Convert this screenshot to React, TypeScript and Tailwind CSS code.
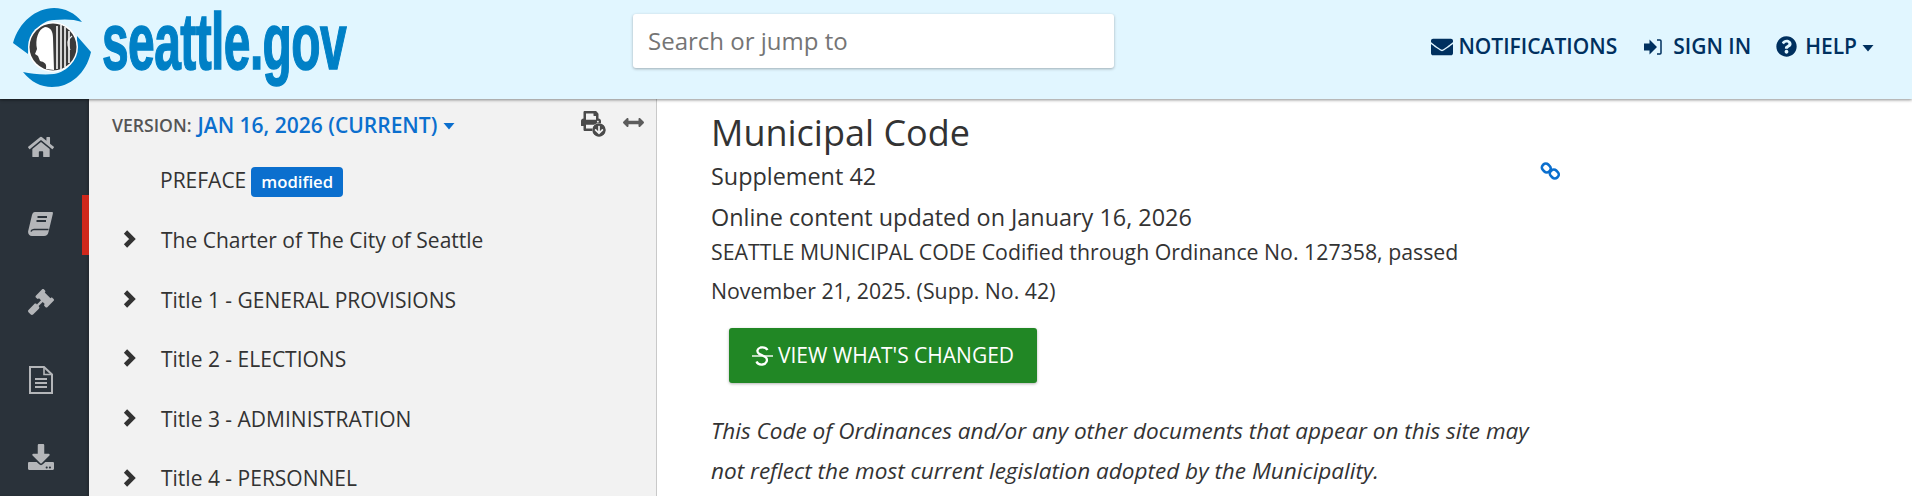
import React from 'react';
import {
    FaArrowCircleDown,
    FaArrowsAltH,
    FaDownload,
    FaEnvelope,
    FaGavel,
    FaHome,
    FaPrint,
    FaQuestionCircle,
} from 'react-icons/fa';

const titles = [
    'The Charter of The City of Seattle',
    'Title 1 - GENERAL PROVISIONS',
    'Title 2 - ELECTIONS',
    'Title 3 - ADMINISTRATION',
    'Title 4 - PERSONNEL',
];

const Caret: React.FC<{ className?: string }> = ({ className }) => (
    <svg width="12" height="7" viewBox="0 0 12 7" className={className}>
        <path d="M0.5 0 H11.5 L6 6.5 Z" fill="currentColor" />
    </svg>
);

const Chevron: React.FC = () => (
    <svg width="13" height="20" viewBox="0 0 13 20" className="-mt-[3px] ml-[34px] mr-[25px] shrink-0">
        <polyline points="2.5,3 9.5,10 2.5,17" fill="none" stroke="#333" strokeWidth="4.6" />
    </svg>
);

const BookIcon: React.FC = () => (
    <svg width="25" height="24" viewBox="0 0 25 24">
        <path d="M7 0 H24 C25 0 25 1 24.8 2 L20.5 20 C20 22.5 18.5 24 16 24 H4 C1 24 -0.5 21.5 0.3 18.5 L4 3 C4.5 1 5.5 0 7 0 Z" fill="#b4b6b9" />
        <path d="M3 19.5 C3.5 18 4.5 17.5 6 17.5 H20.5" fill="none" stroke="#2a323a" strokeWidth="1.6" />
        <path d="M9.5 5 H19 M8.5 9 H18" stroke="#2a323a" strokeWidth="1.8" />
    </svg>
);

const FileIcon: React.FC = () => (
    <svg width="24" height="28" viewBox="0 0 24 28">
        <path d="M1 1 H15 L23 8.5 V27 H1 Z" fill="none" stroke="#b4b6b9" strokeWidth="2" />
        <path d="M15 1 V8.5 H23" fill="none" stroke="#b4b6b9" strokeWidth="1.6" />
        <path d="M6 13 H18 M6 17 H18 M6 21 H18" stroke="#b4b6b9" strokeWidth="2" />
    </svg>
);

const SignInIcon: React.FC = () => (
    <svg width="18" height="16" viewBox="0 0 18 16" className="mr-[11px] shrink-0">
        <path d="M0 4.5 H5.5 V0.5 L13 8 L5.5 15.5 V11.5 H0 Z" fill="currentColor" />
        <path d="M13 1 H16 C16.8 1 17 1.5 17 2 V14 C17 14.5 16.8 15 16 15 H13" fill="none" stroke="currentColor" strokeWidth="1.5" />
    </svg>
);

const StrikeS: React.FC = () => (
    <svg width="21" height="20" viewBox="0 0 21 20" className="mr-[5px] shrink-0">
        <path d="M15.5 4 C14 1.5 11 1 8.5 1.5 C5 2.5 4.5 6 7 7.7 C9 9 12 9.5 14 11.5 C16 14 14.5 18 10.5 18.5 C8 18.8 5.5 18 4.5 15.5" fill="none" stroke="#fff" strokeWidth="2.3" />
        <path d="M0 10 H21" stroke="#fff" strokeWidth="1.4" />
    </svg>
);

const ChainIcon: React.FC<{ className?: string }> = ({ className }) => (
    <svg width="20" height="20" viewBox="0 0 20 20" className={className}>
        <rect x="1.8" y="3.2" width="9" height="7.6" rx="3.4" transform="rotate(45 6.3 7)" fill="none" stroke="#0b6fce" strokeWidth="2.6" />
        <rect x="9.8" y="9.2" width="9" height="7.6" rx="3.4" transform="rotate(45 14.3 13)" fill="none" stroke="#0b6fce" strokeWidth="2.6" />
    </svg>
);

const Logo: React.FC = () => (
    <div className="flex items-start">
        <svg width="100" height="96" viewBox="0 0 100 96" className="ml-[2px] shrink-0">
            {/* swoosh, top and bottom halves */}
            <path d="M11 43 C17 22 34 8 52 8 C63 8 73 13 80 22 C72 19 62 19 52 20 C38 21 28 32 26 54 Z" fill="#0080c6" />
            <path d="M89 52 C84 74 68 87 50 87 C39 87 29 82 21 72 C30 74 42 75 52 74 C66 72 76 60 75 36 Z" fill="#0080c6" />
            <circle cx="51" cy="47" r="25" fill="#fff" />
            <circle cx="51" cy="47" r="23.5" fill="#3a3a3a" />
            <path d="M43 27 C49 27 51 32 51 38 L52 70 L44 69 C45 63 42 62 38 61 L36 56 L33 54 L35 49 C33 40 36 29 43 27 Z" fill="#fff" />
            <path d="M55 26 V69 M59 25 V70 M63 27 V67 M67 31 V63" stroke="#f0f0f0" strokeWidth="1.7" fill="none" />
            <path d="M70 36 C66 39 64 43 68 50" stroke="#f0f0f0" strokeWidth="1.3" fill="none" />
        </svg>
        <span className="mt-[2px] inline-block origin-left scale-x-[0.6] pr-[4px] font-['Liberation_Sans',sans-serif] text-[80px] font-bold leading-none tracking-[-1px] text-[#0080c6] [-webkit-text-stroke:1.5px_#0080c6]">
            seattle.gov
        </span>
    </div>
);

const NavLink: React.FC<{ icon: React.ReactNode; label: string; caret?: boolean; className?: string }> = ({ icon, label, caret, className }) => (
    <a className={`flex items-center text-[21px] font-semibold text-[#00305f] ${className ?? ''}`}>
        {icon}
        <span>{label}</span>
        {caret && <Caret className="ml-[5px] mt-[3px]" />}
    </a>
);

const Header: React.FC = () => (
    <header className="relative z-10 flex h-[99px] shrink-0 items-start bg-[#e1f6ff] shadow-[0_1px_3px_rgba(0,0,0,0.45)]">
        <div className="w-[633px] shrink-0">
            <Logo />
        </div>
        <div className="mt-[14px] flex h-[54px] w-[481px] shrink-0 items-center rounded-[3px] bg-white pl-[15px] text-[24px] text-[#757575] shadow-[0_1px_3px_rgba(0,0,0,0.3)]">
            Search or jump to
        </div>
        <nav className="ml-auto mr-[38px] mt-[31px] flex items-center">
            <NavLink icon={<FaEnvelope className="mr-[5px] text-[22px]" />} label="NOTIFICATIONS" />
            <NavLink className="ml-[27px]" icon={<SignInIcon />} label="SIGN IN" />
            <NavLink className="ml-[25px]" icon={<FaQuestionCircle className="mr-[8px] text-[21px]" />} label="HELP" caret />
        </nav>
    </header>
);

const sideIcons = [
    <FaHome key="home" />,
    <BookIcon key="book" />,
    <FaGavel key="gavel" />,
    <FileIcon key="file" />,
    <FaDownload key="download" />,
];

const SideRail: React.FC = () => (
    <aside className="flex w-[89px] shrink-0 flex-col bg-[#2a323a] pt-[9px] shadow-[inset_-2px_0_2px_rgba(0,0,0,0.15)]">
        {sideIcons.map((icon, i) => (
            <div
                key={i}
                className={`flex h-[78px] items-center justify-center pr-[8px] text-[26px] text-[#b4b6b9] ${i === 1 ? 'relative' : ''}`}
            >
                {icon}
                {i === 1 && <span className="absolute right-0 top-[9px] h-[60px] w-[7px] bg-[#d0281c]" />}
            </div>
        ))}
    </aside>
);

const TreePanel: React.FC = () => (
    <div className="w-[568px] shrink-0 overflow-hidden border-r border-[#c9c9c9] bg-[#f2f2f2]">
        <div className="relative flex h-[52px] items-center pl-[23px] pt-[1px]">
            <span className="text-[17.6px] font-semibold text-[#555]">VERSION:</span>
            <span className="ml-[6px] text-[21px] font-semibold text-[#0b6fce]">JAN 16, 2026 (CURRENT)</span>
            <Caret className="ml-[6px] mt-[2px] text-[#0b6fce]" />
            <span className="absolute left-[492px] top-[12px] text-[#4a4a4a]">
                <FaPrint className="text-[20px]" />
                <FaArrowCircleDown className="absolute left-[11px] top-[12px] rounded-full bg-[#f2f2f2] text-[14px]" />
            </span>
            <FaArrowsAltH className="absolute left-[534px] top-[13px] text-[21px] text-[#5c5c5c]" />
        </div>
        <div className="flex h-[60px] items-center pl-[71px] text-[21px] text-[#333]">
            PREFACE
            <span className="ml-[5px] mt-[2px] rounded-[4px] bg-[#0b6fce] px-[10px] text-[16.7px] font-semibold leading-[30px] text-white">modified</span>
        </div>
        {titles.map(title => (
            <div key={title} className="flex h-[59.6px] items-center text-[21px] text-[#333]">
                <Chevron />
                {title}
            </div>
        ))}
    </div>
);

const Content: React.FC = () => (
    <main className="min-w-0 flex-1 pl-[54px] pt-[10px] text-[#333]">
        <div className="relative w-[850px]">
            <h1 className="text-[36px] leading-[48px]">Municipal Code</h1>
            <p className="text-[23.4px] leading-[38px]">Supplement 42</p>
            <ChainIcon className="absolute left-[829px] top-[52px]" />
            <p className="mt-[3px] text-[23.4px] leading-[38px]">Online content updated on January 16, 2026</p>
            <p className="-mt-[4px] text-[21.3px] leading-[39px]">
                SEATTLE MUNICIPAL CODE Codified through Ordinance No. 127358, passed<br />November 21, 2025. (Supp. No. 42)
            </p>
            <button className="ml-[18px] mt-[18px] flex h-[55px] w-[308px] items-center justify-center rounded-[3px] bg-[#218725] text-[21px] text-white shadow-[0_1px_3px_rgba(0,0,0,0.3)]">
                <StrikeS />
                VIEW WHAT'S CHANGED
            </button>
            <p className="mt-[28px] text-[22.55px] italic leading-[40px]">
                This Code of Ordinances and/or any other documents that appear on this site may<br />not reflect the most current legislation adopted by the Municipality.
            </p>
        </div>
    </main>
);

export default function App() {
    return (
        <div className="flex h-screen flex-col overflow-hidden bg-white font-['Open_Sans',sans-serif]">
            <Header />
            <div className="flex min-h-0 flex-1">
                <SideRail />
                <TreePanel />
                <Content />
            </div>
        </div>
    );
}
